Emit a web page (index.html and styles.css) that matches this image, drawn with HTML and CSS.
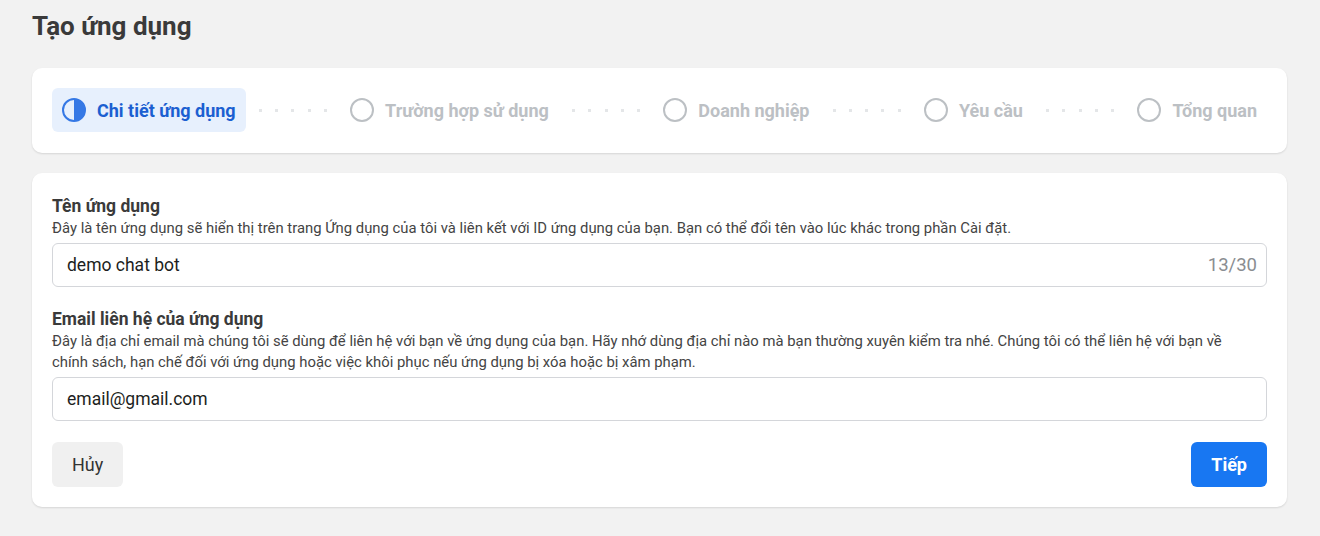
FILE: index.html
```html
<!DOCTYPE html>
<html lang="vi">
<head>
<meta charset="utf-8">
<title>Tạo ứng dụng</title>
<link rel="stylesheet" href="styles.css">
</head>
<body>
<main class="page">
  <h1 class="page-title">Tạo ứng dụng</h1>

  <section class="card stepper">
    <div class="step step-active">
      <svg class="step-icon" viewBox="0 0 24 24" width="24" height="24">
        <circle cx="12" cy="12" r="11" fill="none" stroke="#3578e5" stroke-width="2"/>
        <path d="M12 1 A11 11 0 0 1 12 23 Z" fill="#3578e5"/>
      </svg>
      <span class="step-label">Chi tiết ứng dụng</span>
    </div>
    <div class="connector"><i></i><i></i><i></i><i></i><i></i></div>
    <div class="step">
      <svg class="step-icon" viewBox="0 0 24 24" width="24" height="24"><circle cx="12" cy="12" r="11" fill="none" stroke="#bcc0c4" stroke-width="2"/></svg>
      <span class="step-label">Trường hợp sử dụng</span>
    </div>
    <div class="connector"><i></i><i></i><i></i><i></i><i></i></div>
    <div class="step">
      <svg class="step-icon" viewBox="0 0 24 24" width="24" height="24"><circle cx="12" cy="12" r="11" fill="none" stroke="#bcc0c4" stroke-width="2"/></svg>
      <span class="step-label">Doanh nghiệp</span>
    </div>
    <div class="connector"><i></i><i></i><i></i><i></i><i></i></div>
    <div class="step">
      <svg class="step-icon" viewBox="0 0 24 24" width="24" height="24"><circle cx="12" cy="12" r="11" fill="none" stroke="#bcc0c4" stroke-width="2"/></svg>
      <span class="step-label">Yêu cầu</span>
    </div>
    <div class="connector"><i></i><i></i><i></i><i></i><i></i></div>
    <div class="step">
      <svg class="step-icon" viewBox="0 0 24 24" width="24" height="24"><circle cx="12" cy="12" r="11" fill="none" stroke="#bcc0c4" stroke-width="2"/></svg>
      <span class="step-label">Tổng quan</span>
    </div>
  </section>

  <section class="card form">
    <div class="field">
      <div class="field-label">Tên ứng dụng</div>
      <div class="field-desc">Đây là tên ứng dụng sẽ hiển thị trên trang Ứng dụng của tôi và liên kết với ID ứng dụng của bạn. Bạn có thể đổi tên vào lúc khác trong phần Cài đặt.</div>
      <div class="input">
        <span class="input-value">demo chat bot</span>
        <span class="input-count">13/30</span>
      </div>
    </div>
    <div class="field">
      <div class="field-label">Email liên hệ của ứng dụng</div>
      <div class="field-desc">Đây là địa chỉ email mà chúng tôi sẽ dùng để liên hệ với bạn về ứng dụng của bạn. Hãy nhớ dùng địa chỉ nào mà bạn thường xuyên kiểm tra nhé. Chúng tôi có thể liên hệ với bạn về chính sách, hạn chế đối với ứng dụng hoặc việc khôi phục nếu ứng dụng bị xóa hoặc bị xâm phạm.</div>
      <div class="input">
        <span class="input-value">email@gmail.com</span>
      </div>
    </div>
    <div class="actions">
      <button class="btn btn-secondary" type="button">Hủy</button>
      <button class="btn btn-primary" type="button">Tiếp</button>
    </div>
  </section>
</main>
</body>
</html>
```

FILE: styles.css
```css
* { box-sizing: border-box; }

html, body {
  margin: 0;
  background: #f2f2f2;
  font-family: Roboto, "Liberation Sans", Arial, sans-serif;
  color: #1c1e21;
}

.page {
  padding: 10px 33px 29px 32px;
}

.page-title {
  margin: 0 0 26px;
  font-size: 26px;
  line-height: 32px;
  font-weight: 700;
  color: #3a3a3a;
}

.card {
  background: #fff;
  border-radius: 10px;
  box-shadow: 0 1px 2px rgba(0, 0, 0, 0.12);
}

.stepper {
  display: flex;
  align-items: center;
  padding: 20px 20px 21px;
}

.step {
  display: flex;
  align-items: center;
  gap: 11px;
  height: 44px;
  padding: 0 10px;
  border-radius: 6px;
  flex: none;
}

.step-icon { flex: none; display: block; }

.step-label {
  font-size: 18px;
  font-weight: 700;
  color: #bcc0c4;
  white-space: nowrap;
}

.step-active { background: #e7f0fd; }
.step-active .step-label { color: #1b5fd1; }

.connector {
  flex: 1;
  display: flex;
  justify-content: space-evenly;
  align-items: center;
}

.connector i {
  width: 3px;
  height: 3px;
  background: #e4e6e8;
}

.form {
  margin-top: 20px;
  padding: 23px 20px 20px;
}

.field + .field { margin-top: 22px; }

.field-label {
  font-size: 17.5px;
  line-height: 20px;
  font-weight: 700;
  color: #3a3a3a;
}

.field-desc {
  margin-top: 2px;
  max-width: 1200px;
  font-size: 14.85px;
  line-height: 21px;
  color: #444;
}

.input {
  margin-top: 4px;
  height: 44px;
  border: 1px solid #d4d6da;
  border-radius: 6px;
  display: flex;
  align-items: center;
  justify-content: space-between;
  padding: 0 9px 0 14px;
}

.input-value {
  font-size: 17.5px;
  color: #1c1e21;
}

.input-count {
  font-size: 18.5px;
  color: #8a8d91;
}

.actions {
  margin-top: 21px;
  display: flex;
  justify-content: space-between;
}

.btn {
  height: 45px;
  border: none;
  border-radius: 6px;
  font-family: inherit;
  font-size: 18px;
  padding: 0 20px;
  cursor: pointer;
}

.btn-secondary {
  background: #f0f0f0;
  color: #333;
}

.btn-primary {
  background: #1877f2;
  color: #fff;
  font-weight: 700;
}
```
